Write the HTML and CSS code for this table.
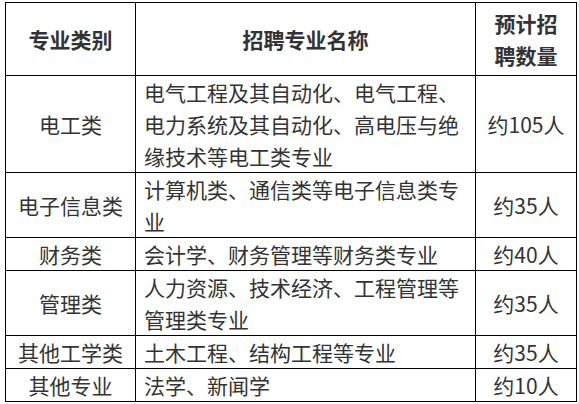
FILE: index.html
```html
<!DOCTYPE html>
<html lang="zh-CN">
<head>
<meta charset="utf-8">
<title>招聘专业</title>
<link rel="stylesheet" href="styles.css">
</head>
<body>
<table class="recruit">
  <colgroup>
    <col class="c1">
    <col class="c2">
    <col class="c3">
  </colgroup>
  <thead>
    <tr>
      <th>专业类别</th>
      <th>招聘专业名称</th>
      <th>预计招<br>聘数量</th>
    </tr>
  </thead>
  <tbody>
    <tr>
      <td class="cat">电工类</td>
      <td class="name">电气工程及其自动化、电气工程、电力系统及其自动化、高电压与绝缘技术等电工类专业</td>
      <td class="num">约105人</td>
    </tr>
    <tr>
      <td class="cat">电子信息类</td>
      <td class="name">计算机类、通信类等电子信息类专业</td>
      <td class="num">约35人</td>
    </tr>
    <tr>
      <td class="cat">财务类</td>
      <td class="name">会计学、财务管理等财务类专业</td>
      <td class="num">约40人</td>
    </tr>
    <tr>
      <td class="cat">管理类</td>
      <td class="name">人力资源、技术经济、工程管理等管理类专业</td>
      <td class="num">约35人</td>
    </tr>
    <tr>
      <td class="cat">其他工学类</td>
      <td class="name">土木工程、结构工程等专业</td>
      <td class="num">约35人</td>
    </tr>
    <tr>
      <td class="cat">其他专业</td>
      <td class="name">法学、新闻学</td>
      <td class="num">约10人</td>
    </tr>
  </tbody>
</table>
</body>
</html>
```

FILE: styles.css
```css
html, body {
  margin: 0;
  padding: 0;
  background: #fff;
}
body {
  padding: 2px 0 0 5px;
  font-family: "Noto Sans CJK SC", "Noto Sans", sans-serif;
  color: #333;
}
.recruit {
  border-collapse: collapse;
  table-layout: fixed;
  width: 571px;
  font-size: 21px;
  line-height: 32px;
}
.c1 { width: 130px; }
.c2 { width: 340px; }
.c3 { width: 101px; }
.recruit th,
.recruit td {
  border: 1px solid #000;
  padding: 0 8px;
  vertical-align: middle;
}
.recruit th {
  font-weight: bold;
  text-align: center;
  padding-top: 4px;
  padding-bottom: 4px;
  height: 64px;
  box-sizing: content-box;
}
.cat, .num {
  text-align: center;
  padding-left: 0;
  padding-right: 0;
}
.name {
  text-align: left;
}
```
